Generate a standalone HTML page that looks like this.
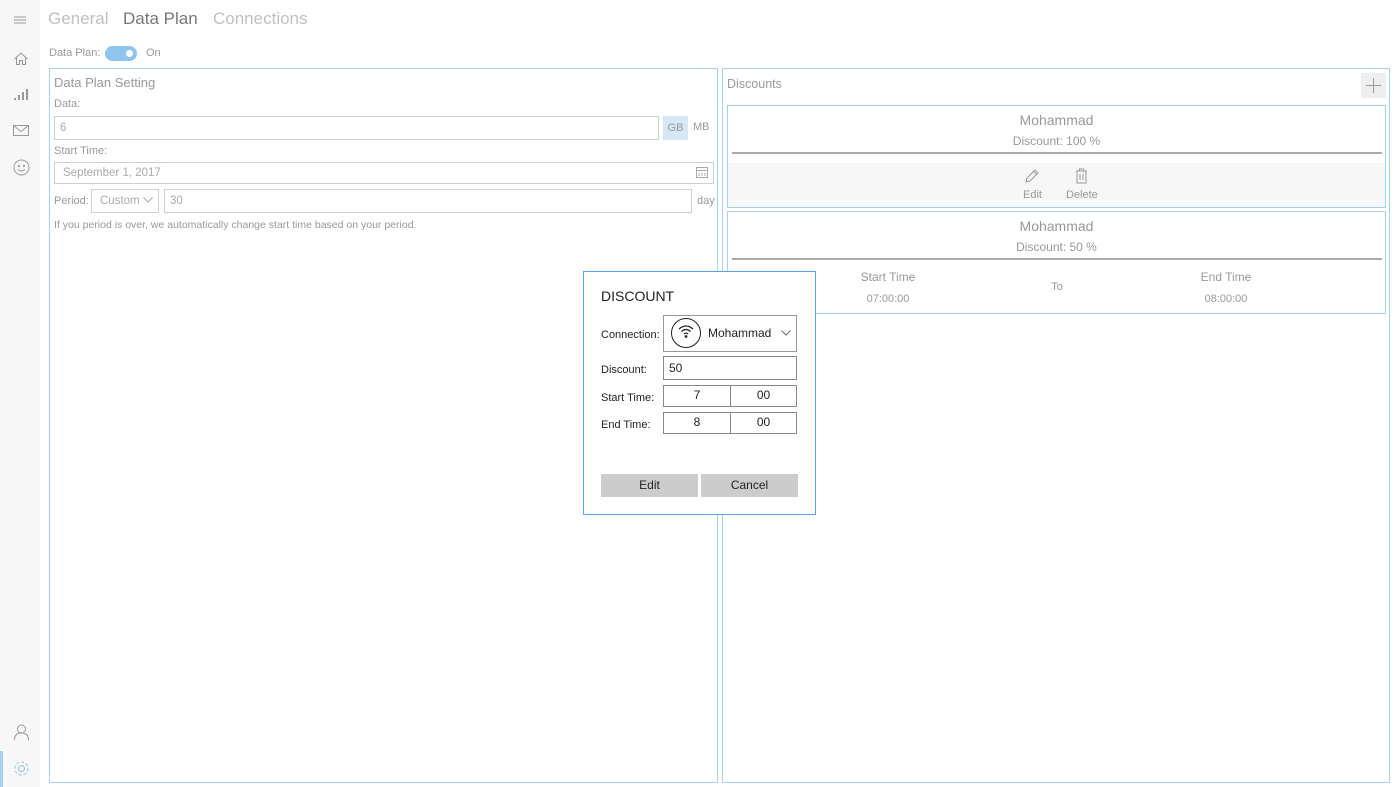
<!DOCTYPE html>
<html><head><style>
*{box-sizing:border-box;margin:0;padding:0}
body{width:1399px;height:787px;background:#fff;font-family:"Liberation Sans",sans-serif;position:relative;overflow:hidden;color:#999}
.a{position:absolute}
.side{left:0;top:0;width:40px;height:787px;background:#f7f7f7}
.box{border:1px solid #a8d0f2}
.inp{border:1px solid #d0d0d0;font-size:11.5px;color:#aaa;padding-left:5px;line-height:20px}
.t{font-size:11px;color:#999}
.d{border:1px solid #888;color:#222;font-size:12px;text-align:center;line-height:19px}
.l{font-size:11px;color:#222}
</style></head><body>
<div class="a side"></div>
<svg class="a" style="left:14px;top:14px" width="14" height="12"><path d="M0 3h12M0 6h12M0 9h12" stroke="#999" stroke-width="1"/></svg>
<svg class="a" style="left:13px;top:51px" width="16" height="16" fill="none" stroke="#999"><path d="M1.5 8L8 2l6.5 6M3.5 6.5v7h3v-4h3v4h3v-7"/></svg>
<svg class="a" style="left:14px;top:88px" width="16" height="14" fill="#999"><rect x="0" y="10" width="2" height="2"/><rect x="4" y="7" width="2" height="5"/><rect x="8" y="4" width="2" height="8"/><rect x="12" y="1" width="2" height="11"/></svg>
<svg class="a" style="left:13px;top:125px" width="16" height="12" fill="none" stroke="#999"><rect x="0.5" y="0.5" width="15" height="10"/><path d="M0.5 0.5l7.5 6 7.5-6"/></svg>
<svg class="a" style="left:13px;top:159px" width="17" height="17" fill="none" stroke="#999"><circle cx="8.5" cy="8.5" r="7.5"/><circle cx="6" cy="7" r=".6" fill="#999"/><circle cx="11" cy="7" r=".6" fill="#999"/><path d="M5 10.5q3.5 3 7 0"/></svg>
<svg class="a" style="left:14px;top:724px" width="15" height="17" fill="none" stroke="#999"><circle cx="7.5" cy="5" r="4"/><path d="M0.5 16q0-7 7-7t7 7"/></svg>
<div class="a" style="left:0;top:751px;width:3px;height:36px;background:#a8d0f2"></div>
<svg class="a" style="left:13px;top:760px" width="17" height="17" fill="none" stroke="#8fc0ec"><circle cx="8.5" cy="8.5" r="3"/><circle cx="8.5" cy="8.5" r="6.5" stroke-dasharray="3 2"/></svg>

<div class="a" style="left:48px;top:9px;font-size:17px;color:#c0c0c0">General</div>
<div class="a" style="left:123px;top:9px;font-size:17px;color:#777">Data Plan</div>
<div class="a" style="left:213px;top:9px;font-size:17px;color:#c0c0c0">Connections</div>
<div class="a t" style="left:49px;top:47px">Data Plan:</div>
<div class="a" style="left:105px;top:46px;width:32px;height:15px;border-radius:8px;background:#8fc4ee"></div>
<div class="a" style="left:126px;top:50px;width:7px;height:7px;border-radius:50%;background:#fff"></div>
<div class="a t" style="left:146px;top:47px">On</div>

<div class="a box" style="left:49px;top:68px;width:669px;height:715px"></div>
<div class="a" style="left:54px;top:75px;font-size:13px;color:#999">Data Plan Setting</div>
<div class="a t" style="left:54px;top:98px">Data:</div>
<div class="a inp" style="left:54px;top:116px;width:605px;height:24px;line-height:22px">6</div>
<div class="a t" style="left:663px;top:116px;width:25px;height:24px;background:#d6e8f7;text-align:center;line-height:24px">GB</div>
<div class="a t" style="left:693px;top:121px">MB</div>
<div class="a t" style="left:54px;top:145px">Start Time:</div>
<div class="a inp" style="left:54px;top:162px;width:660px;height:22px;padding-left:8px">September 1, 2017</div>
<svg class="a" style="left:696px;top:167px" width="12" height="11" fill="none" stroke="#aaa"><rect x=".5" y=".5" width="11" height="10"/><path d="M.5 3.5h11M3 6v3M6 6v3M9 6v3"/></svg>
<div class="a t" style="left:54px;top:195px">Period:</div>
<div class="a inp" style="left:91px;top:189px;width:68px;height:24px;line-height:22px;padding-left:8px">Custom</div>
<svg class="a" style="left:143px;top:197px" width="10" height="6" fill="none" stroke="#aaa"><path d="M.5.5l4.5 4.5 4.5-4.5"/></svg>
<div class="a inp" style="left:164px;top:189px;width:528px;height:24px;line-height:22px">30</div>
<div class="a t" style="left:697px;top:195px">day</div>
<div class="a" style="left:54px;top:219px;font-size:10.5px;color:#999">If you period is over, we automatically change start time based on your period.</div>

<div class="a box" style="left:722px;top:68px;width:668px;height:715px"></div>
<div class="a" style="left:727px;top:77px;font-size:12.5px;color:#999">Discounts</div>
<div class="a" style="left:1361px;top:73px;width:25px;height:25px;background:#eee"></div>
<svg class="a" style="left:1366px;top:78px" width="15" height="15" stroke="#999"><path d="M7.5 0v15M0 7.5h15"/></svg>
<div class="a box" style="left:727px;top:105px;width:659px;height:103px"></div>
<div class="a" style="left:727px;top:112px;width:659px;text-align:center;font-size:14px">Mohammad</div>
<div class="a" style="left:727px;top:134px;width:659px;text-align:center;font-size:12px">Discount: 100 %</div>
<div class="a" style="left:732px;top:152px;width:650px;height:2px;background:#aaa"></div>
<div class="a" style="left:728px;top:163px;width:657px;height:44px;background:#f7f7f7"></div>
<svg class="a" style="left:1024px;top:168px" width="16" height="16" fill="none" stroke="#999"><path d="M2 14l1-4 8-8 3 3-8 8zM9.5 3.5l3 3"/></svg>
<svg class="a" style="left:1075px;top:168px" width="13" height="16" fill="none" stroke="#999"><path d="M1 3h11M4.5 3V1h4v2M2 3v12h9V3M5 6v6M8 6v6"/></svg>
<div class="a t" style="left:1023px;top:189px">Edit</div>
<div class="a t" style="left:1066px;top:189px">Delete</div>
<div class="a box" style="left:727px;top:211px;width:659px;height:103px"></div>
<div class="a" style="left:727px;top:218px;width:659px;text-align:center;font-size:14px">Mohammad</div>
<div class="a" style="left:727px;top:240px;width:659px;text-align:center;font-size:12px">Discount: 50 %</div>
<div class="a" style="left:732px;top:258px;width:650px;height:2px;background:#aaa"></div>
<div class="a" style="left:838px;top:270px;width:100px;text-align:center;font-size:12px">Start Time</div>
<div class="a" style="left:838px;top:293px;width:100px;text-align:center;font-size:11px">07:00:00</div>
<div class="a" style="left:1007px;top:281px;width:100px;text-align:center;font-size:11px">To</div>
<div class="a" style="left:1176px;top:270px;width:100px;text-align:center;font-size:12px">End Time</div>
<div class="a" style="left:1176px;top:293px;width:100px;text-align:center;font-size:11px">08:00:00</div>

<div class="a" style="left:583px;top:271px;width:233px;height:244px;background:#fff;border:1px solid #5aa4e6"></div>
<div class="a" style="left:601px;top:288px;font-size:14px;color:#222">DISCOUNT</div>
<div class="a l" style="left:601px;top:329px">Connection:</div>
<div class="a" style="left:663px;top:315px;width:134px;height:37px;border:1px solid #999"></div>
<div class="a" style="left:671px;top:318px;width:30px;height:30px;border:1.5px solid #222;border-radius:50%"></div>
<svg class="a" style="left:678px;top:325px" width="16" height="13" fill="none" stroke="#222" stroke-width="1.2"><path d="M1 4q7-6 14 0M3.5 6.5q4.5-4 9 0M6 9q2-1.8 4 0"/><circle cx="8" cy="11.5" r=".8" fill="#222"/></svg>
<div class="a" style="left:708px;top:326px;font-size:12px;color:#222">Mohammad</div>
<svg class="a" style="left:781px;top:330px" width="10" height="6" fill="none" stroke="#666"><path d="M.5.5l4.5 4.5 4.5-4.5"/></svg>
<div class="a l" style="left:601px;top:364px">Discount:</div>
<div class="a d" style="left:663px;top:356px;width:134px;height:24px;text-align:left;padding-left:5px;line-height:22px;border-width:1.5px">50</div>
<div class="a l" style="left:601px;top:392px">Start Time:</div>
<div class="a d" style="left:663px;top:385px;width:68px;height:22px">7</div>
<div class="a d" style="left:730px;top:385px;width:67px;height:22px">00</div>
<div class="a l" style="left:601px;top:419px">End Time:</div>
<div class="a d" style="left:663px;top:412px;width:68px;height:22px">8</div>
<div class="a d" style="left:730px;top:412px;width:67px;height:22px">00</div>
<div class="a" style="left:601px;top:474px;width:97px;height:23px;background:#ccc;color:#222;font-size:12px;text-align:center;line-height:23px">Edit</div>
<div class="a" style="left:701px;top:474px;width:97px;height:23px;background:#ccc;color:#222;font-size:12px;text-align:center;line-height:23px">Cancel</div>
</body></html>
